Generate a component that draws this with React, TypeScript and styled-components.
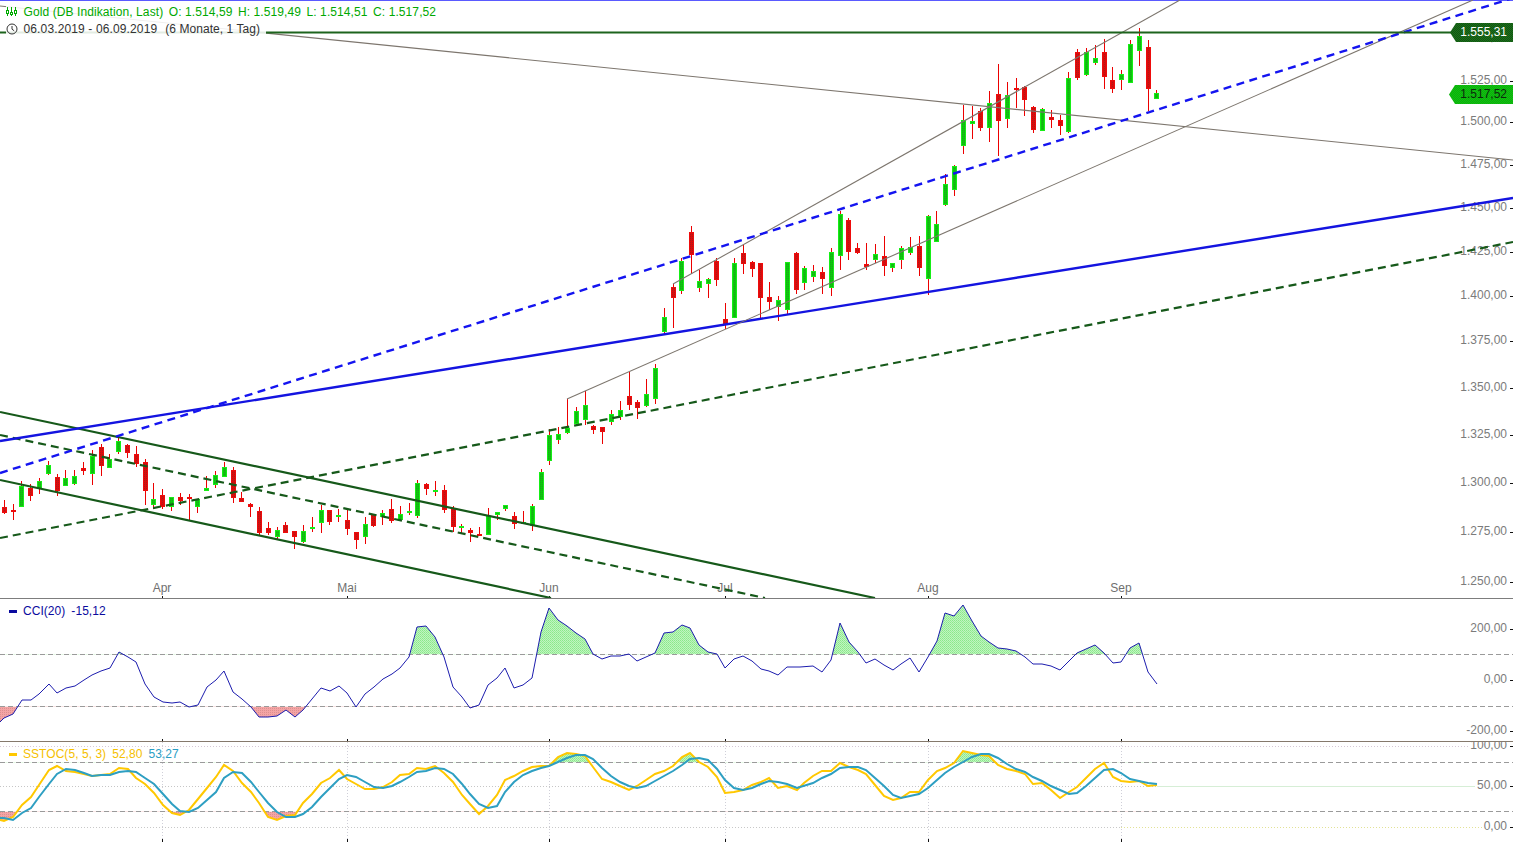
import * as React from "react";
import styled, { createGlobalStyle } from "styled-components";

// x, high, body top, body bottom, low, up/down
type Candle = [number, number, number, number, number, "u" | "d"];

const CANDLES: Candle[] = [
  [4, 500, 507, 513, 514, "d"], [13, 504, 510, 512, 520, "d"], [21, 481, 486, 507, 507, "u"], [30, 484, 488, 496, 501, "d"],
  [39, 478, 481, 489, 494, "u"], [48, 461, 465, 474, 475, "u"], [57, 474, 477, 491, 496, "d"], [65, 470, 478, 486, 486, "u"],
  [74, 470, 476, 484, 485, "u"], [83, 462, 468, 471, 475, "d"], [92, 450, 456, 474, 485, "u"], [101, 444, 447, 466, 476, "d"],
  [109, 454, 459, 468, 468, "u"], [118, 437, 441, 452, 454, "u"], [127, 444, 445, 453, 458, "d"], [136, 446, 454, 464, 467, "d"],
  [145, 459, 462, 491, 505, "d"], [153, 483, 499, 505, 509, "u"], [162, 489, 495, 507, 509, "d"], [171, 497, 497, 507, 511, "u"],
  [180, 493, 497, 501, 505, "d"], [189, 494, 497, 499, 520, "d"], [197, 499, 499, 507, 513, "u"], [206, 476, 488, 491, 491, "u"],
  [215, 471, 475, 485, 488, "u"], [224, 462, 467, 477, 477, "u"], [233, 467, 470, 498, 503, "d"], [241, 492, 498, 502, 502, "d"],
  [250, 503, 504, 507, 517, "d"], [259, 507, 511, 533, 535, "d"], [268, 522, 528, 533, 535, "d"], [277, 527, 530, 537, 539, "u"],
  [285, 522, 525, 533, 533, "d"], [294, 531, 531, 537, 549, "d"], [303, 525, 531, 542, 543, "u"], [312, 517, 527, 529, 532, "u"],
  [321, 505, 510, 523, 533, "u"], [329, 510, 510, 522, 525, "d"], [338, 509, 515, 517, 522, "u"], [347, 508, 520, 529, 535, "d"],
  [356, 532, 532, 540, 549, "d"], [365, 517, 524, 537, 544, "u"], [373, 514, 515, 526, 527, "d"], [382, 510, 513, 517, 525, "u"],
  [391, 499, 509, 521, 523, "d"], [400, 506, 514, 520, 520, "u"], [409, 503, 511, 513, 515, "u"], [417, 480, 483, 516, 518, "u"],
  [426, 483, 484, 489, 495, "d"], [435, 481, 490, 492, 496, "u"], [444, 485, 490, 510, 513, "d"], [453, 506, 509, 527, 532, "d"],
  [461, 524, 526, 528, 534, "u"], [470, 528, 530, 533, 542, "d"], [479, 527, 534, 536, 536, "d"], [488, 508, 516, 535, 535, "u"],
  [497, 512, 512, 515, 520, "u"], [505, 505, 505, 509, 511, "u"], [514, 512, 516, 524, 529, "d"], [523, 511, 522, 523, 523, "u"],
  [532, 504, 506, 526, 531, "u"], [541, 469, 472, 500, 500, "u"], [549, 429, 435, 461, 465, "u"], [558, 427, 434, 440, 444, "u"],
  [567, 399, 428, 433, 434, "u"], [576, 407, 411, 424, 425, "u"], [585, 391, 405, 420, 425, "u"], [593, 425, 426, 430, 434, "d"],
  [602, 427, 427, 432, 444, "d"], [611, 410, 414, 422, 425, "u"], [620, 401, 410, 417, 420, "u"], [629, 372, 396, 405, 410, "d"],
  [637, 400, 402, 408, 419, "d"], [646, 379, 394, 406, 407, "u"], [655, 364, 368, 399, 404, "u"], [664, 308, 317, 332, 335, "u"],
  [673, 284, 287, 298, 328, "d"], [681, 258, 261, 291, 294, "u"], [691, 226, 232, 255, 274, "d"], [699, 270, 281, 288, 292, "u"],
  [708, 278, 279, 284, 298, "u"], [716, 258, 261, 280, 286, "d"], [725, 303, 319, 324, 329, "d"], [734, 258, 263, 318, 318, "u"],
  [743, 245, 253, 264, 274, "d"], [752, 261, 262, 269, 277, "d"], [760, 263, 263, 298, 319, "d"], [769, 282, 297, 302, 310, "d"],
  [778, 296, 300, 307, 321, "u"], [787, 262, 262, 310, 315, "u"], [796, 252, 253, 290, 294, "d"], [804, 266, 268, 283, 290, "u"],
  [813, 265, 271, 277, 282, "u"], [822, 267, 272, 279, 294, "d"], [831, 248, 252, 288, 296, "u"], [840, 211, 214, 256, 270, "u"],
  [848, 218, 220, 252, 260, "d"], [857, 243, 248, 253, 254, "d"], [866, 243, 264, 267, 270, "d"], [875, 244, 254, 260, 263, "u"],
  [884, 236, 256, 266, 276, "d"], [892, 263, 263, 268, 272, "u"], [901, 246, 248, 260, 269, "u"], [910, 237, 247, 253, 255, "u"],
  [919, 236, 246, 268, 276, "d"], [928, 215, 216, 279, 295, "u"], [936, 211, 224, 242, 242, "u"], [945, 174, 184, 205, 206, "u"],
  [954, 165, 166, 190, 196, "u"], [963, 105, 120, 146, 154, "u"], [972, 106, 121, 124, 139, "u"], [980, 108, 111, 128, 131, "d"],
  [989, 91, 103, 128, 142, "u"], [998, 64, 94, 121, 156, "d"], [1007, 82, 95, 119, 128, "u"], [1016, 78, 88, 90, 108, "d"],
  [1024, 86, 87, 100, 116, "d"], [1033, 106, 107, 130, 133, "d"], [1042, 108, 109, 131, 131, "u"], [1051, 110, 117, 120, 128, "d"],
  [1060, 115, 120, 126, 135, "d"], [1068, 72, 78, 132, 133, "u"], [1077, 49, 52, 78, 80, "d"], [1086, 48, 52, 75, 76, "u"],
  [1095, 45, 58, 63, 65, "u"], [1104, 39, 52, 77, 89, "d"], [1112, 67, 80, 89, 93, "d"], [1121, 70, 74, 80, 90, "u"],
  [1130, 40, 44, 83, 83, "u"], [1139, 28, 36, 51, 66, "u"], [1148, 40, 47, 89, 111, "d"], [1156, 90, 93, 99, 99, "u"]
];

const CCI =
  "0,722 4,718 13,714 22,700 31,700 39,694 49,684 57,693 66,688 75,686 84,680 92,675 101,671 110,668 119,652 128,657 136,662 145,684 154,697 163,702 172,703 180,702 189,707 198,705 207,687 216,680 224,671 233,692 242,699 251,707 259,717 268,717 277,716 286,710 295,717 303,710 312,699 321,688 330,691 339,686 347,693 356,707 365,694 374,687 383,679 392,674 400,668 " +
  "409,657 417,627 426,626 435,637 444,657 453,687 462,697 470,708 479,705 488,685 497,678 505,668 514,688 523,685 532,678 541,632 549,608 558,620 567,626 576,633 585,639 593,654 602,659 611,656 620,656 629,654 637,661 646,657 655,653 664,633 673,632 682,625 690,628 699,645 708,652 717,654 725,668 734,659 743,656 752,661 761,669 769,671 778,675 787,667 800,667 " +
  "813,666 822,672 831,660 840,623 849,642 858,652 866,663 875,659 884,665 893,670 901,664 910,658 919,672 928,657 937,641 945,613 954,616 963,605 972,621 981,636 989,642 998,648 1007,649 1016,651 1025,657 1033,664 1042,664 1051,666 1060,670 1069,661 1077,653 1086,649 1095,645 1104,653 1113,663 1121,662 1130,648 1139,643 1148,672 1157,684";

const STOCH_FAST =
  "0,820 4,821 13,817 22,805 31,797 39,785 49,770 57,766 66,771 75,772 84,774 92,776 101,775 110,774 119,768 128,769 136,778 145,784 154,793 163,805 172,813 180,815 189,810 198,799 207,788 216,777 224,765 233,771 242,783 251,792 259,803 268,817 277,820 286,816 295,815 303,803 312,794 321,783 330,778 339,770 347,779 356,784 365,789 374,789 383,787 392,782 400,775 " +
  "409,774 417,768 426,769 435,766 444,773 453,782 462,795 470,804 479,814 488,806 497,795 505,780 514,776 523,771 532,767 541,766 549,766 558,757 567,753 576,754 585,756 593,767 602,779 611,782 620,786 629,790 637,786 646,780 655,774 664,771 673,766 682,757 690,753 699,762 708,767 717,777 725,793 734,792 743,790 752,785 761,782 769,778 778,788 787,786 797,790 " +
  "804,783 813,776 822,771 831,771 840,763 849,767 858,770 866,774 875,785 884,796 893,800 901,798 910,792 919,792 928,780 937,771 945,768 954,763 963,751 972,753 981,755 989,756 998,765 1007,769 1016,771 1025,774 1033,784 1042,783 1051,790 1060,798 1069,792 1077,787 1086,778 1095,769 1104,763 1113,777 1121,781 1130,782 1139,781 1148,786 1157,785";

const STOCH_SLOW =
  "0,818 4,818 13,820 22,813 31,808 39,797 49,784 57,774 66,769 75,770 84,773 92,776 101,775 110,775 119,772 128,771 136,772 145,778 154,784 163,794 172,804 180,811 189,812 198,808 207,800 216,792 224,778 233,772 242,773 251,782 259,792 268,803 277,812 286,817 295,817 303,814 312,807 321,797 330,788 339,779 347,775 356,777 365,782 374,787 383,788 392,786 400,782 " +
  "409,777 417,772 426,771 435,768 444,769 453,774 462,784 470,794 479,804 488,808 497,806 505,792 514,782 523,775 532,771 541,768 549,766 558,762 567,758 576,755 585,755 593,759 602,768 611,776 620,782 629,786 637,788 646,786 655,781 664,776 673,771 682,765 690,759 699,758 708,760 717,769 725,780 734,788 743,790 752,788 761,784 769,781 778,782 787,784 797,788 " +
  "813,783 822,778 831,774 840,768 849,767 858,767 866,770 875,778 884,786 893,795 901,798 910,796 919,794 928,788 937,780 945,773 954,767 963,762 972,757 981,754 989,754 998,758 1007,764 1016,769 1025,772 1033,777 1042,781 1051,786 1060,790 1069,794 1077,793 1086,786 1095,778 1104,770 1113,769 1121,773 1130,779 1139,781 1148,783 1157,784";

const PRICE_LABELS: [string, number][] = [
  ["1.550,00", 38], ["1.525,00", 81], ["1.500,00", 122], ["1.475,00", 165], ["1.450,00", 208], ["1.425,00", 252],
  ["1.400,00", 296], ["1.375,00", 341], ["1.350,00", 388], ["1.325,00", 435], ["1.300,00", 483], ["1.275,00", 532], ["1.250,00", 582]
];
const CCI_LABELS: [string, number][] = [["200,00", 629], ["0,00", 680], ["-200,00", 731]];
const STOCH_LABELS: [string, number][] = [["100,00", 746], ["50,00", 786], ["0,00", 827]];
const MONTHS: [string, number][] = [["Apr", 162], ["Mai", 347], ["Jun", 549], ["Jul", 725], ["Aug", 928], ["Sep", 1121]];

const closeOver = (points: string, level: number) => {
  const first = points.split(" ")[0].split(",")[0];
  const last = points.split(" ").pop()!.split(",")[0];
  return `${first},${level} ${points} ${last},${level}`;
};

const App: React.FC = () => (
  <Page>
    <GlobalStyle />
    <MainPane $height={599}>
      <Chart width={1513} height={598} viewBox="0 0 1513 598">
        <defs>
          <pattern id="upFill" width="2" height="2" patternUnits="userSpaceOnUse">
            <rect width="2" height="2" fill="#0cc80c" />
            <rect width="1" height="1" fill="#1ea01e" />
          </pattern>
          <pattern id="downFill" width="2" height="2" patternUnits="userSpaceOnUse">
            <rect width="2" height="2" fill="#dc0c0c" />
            <rect width="1" height="1" fill="#aa1a1a" />
          </pattern>
        </defs>
        <TopRule x1={0} x2={1513} y1={0.5} y2={0.5} />
        {PRICE_LABELS.map(([label, y]) => (
          <AxisTicked key={label} label={label} y={y} />
        ))}
        {MONTHS.map(([label, x]) => (
          <React.Fragment key={label}>
            <MonthLabel x={x} y={592}>{label}</MonthLabel>
            <Tick x1={x + 0.5} x2={x + 0.5} y1={596} y2={598} />
          </React.Fragment>
        ))}
        {CANDLES.map(([x, high, top, bottom, low, dir]) => (
          <g key={x}>
            <Wick x1={x + 0.5} x2={x + 0.5} y1={high} y2={low} />
            <Body x={x - 1.5} y={top + 0.5} width={4} height={Math.max(bottom - top - 1, 1)} $up={dir === "u"} />
          </g>
        ))}
        <SolidGreen x1={0} y1={412} x2={875} y2={598} />
        <SolidGreen x1={0} y1={480} x2={551} y2={598} />
        <DashedGreen x1={0} y1={435} x2={765} y2={598} />
        <DashedGreen x1={0} y1={538} x2={1513} y2={242} />
        <SolidBlue x1={0} y1={441} x2={1513} y2={198} />
        <GreyTrend x1={0} y1={6} x2={1513} y2={160} />
        <GreyTrend x1={567} y1={399} x2={1473} y2={0} />
        <GreyTrend x1={673} y1={284} x2={1180} y2={0} />
        <DashedBlue x1={0} y1={473} x2={1513} y2={-2} />
        <ResistanceLine x1={0} y1={32.5} x2={1513} y2={32.5} />
      </Chart>

      <Header>
        <GreenRow>
          <IconSlot>
            <svg width="12" height="9" viewBox="0 0 12 9" fill="none" stroke="#00aa00" strokeWidth="1">
              <path d="M1.5 0v9M5.5 0v9M9.5 0v9" />
              <rect x="0.5" y="3.5" width="2" height="3" fill="#fff" />
              <rect x="4.5" y="5.5" width="2" height="2" fill="#fff" />
              <rect x="8.5" y="3.5" width="2" height="3" fill="#fff" />
            </svg>
          </IconSlot>
          <span>Gold (DB Indikation, Last)</span>
          <span>O: 1.514,59</span>
          <span>H: 1.519,49</span>
          <span>L: 1.514,51</span>
          <span>C: 1.517,52</span>
        </GreenRow>
        <DateRow>
          <IconSlot>
            <svg width="12" height="12" viewBox="0 0 12 12" fill="none" stroke="#333" strokeWidth="1">
              <circle cx="6" cy="6" r="5" />
              <path d="M6 3v3.2l2.2 1.6" />
            </svg>
          </IconSlot>
          <span>06.03.2019 - 06.09.2019</span>
          <RangeNote>(6 Monate, 1 Tag)</RangeNote>
        </DateRow>
      </Header>

      <PriceBadge $tone="dark" $top={23}>1.555,31</PriceBadge>
      <PriceBadge $tone="light" $top={85}>1.517,52</PriceBadge>
    </MainPane>

    <IndicatorPane $height={143}>
      <Chart width={1513} height={142} viewBox="0 599 1513 142">
        <defs>
          <pattern id="overFill" width="2" height="2" patternUnits="userSpaceOnUse">
            <rect width="2" height="2" fill="#c0f5c0" />
            <rect width="1" height="1" fill="#8ae88a" />
            <rect x="1" y="1" width="1" height="1" fill="#98ec98" />
          </pattern>
          <pattern id="underFill" width="2" height="2" patternUnits="userSpaceOnUse">
            <rect width="2" height="2" fill="#f4a4a4" />
            <rect width="1" height="1" fill="#dd9090" />
          </pattern>
          <clipPath id="cciOver"><rect x="0" y="599" width="1513" height="55.5" /></clipPath>
          <clipPath id="cciUnder"><rect x="0" y="706.5" width="1513" height="35" /></clipPath>
          <clipPath id="stochOver"><rect x="0" y="742" width="1513" height="20.5" /></clipPath>
          <clipPath id="stochUnder"><rect x="0" y="811.5" width="1513" height="31" /></clipPath>
        </defs>
        <polygon points={closeOver(CCI, 654.5)} fill="url(#overFill)" clipPath="url(#cciOver)" />
        <polygon points={closeOver(CCI, 706.5)} fill="url(#underFill)" clipPath="url(#cciUnder)" />
        <LevelLine x1={0} x2={1513} y1={654.5} y2={654.5} />
        <LevelLine x1={0} x2={1513} y1={706.5} y2={706.5} />
        <CciLine points={CCI} />
        {CCI_LABELS.map(([label, y]) => (
          <AxisTicked key={label} label={label} y={y} />
        ))}
        {MONTHS.map(([label, x]) => (
          <Tick key={label} x1={x + 0.5} x2={x + 0.5} y1={739} y2={741} />
        ))}
      </Chart>
      <Legend>
        <LegendMark $color="#0a0a9e" />
        <LegendText $color="#0a0a9e">CCI(20)</LegendText>
        <LegendText $color="#0a0a9e">-15,12</LegendText>
      </Legend>
    </IndicatorPane>

    <StochPane $height={100}>
      <Chart width={1513} height={100} viewBox="0 742 1513 100">
        {MONTHS.map(([label, x]) => (
          <MonthGuide key={label} x1={x + 0.5} x2={x + 0.5} y1={742} y2={839} />
        ))}
        <DottedLevel x1={0} x2={1468} y1={746.5} y2={746.5} $color="#d6c8d6" />
        <DottedLevel x1={0} x2={1157} y1={786.5} y2={786.5} $color="#c6c6c6" />
        <PaleLevel x1={1157} x2={1475} y1={786.5} y2={786.5} />
        <DottedLevel x1={0} x2={1121} y1={827.5} y2={827.5} $color="#c8c8c8" />
        <DottedLevel x1={1121} x2={1483} y1={827.5} y2={827.5} $color="#e2e296" />
        <polygon points={closeOver(STOCH_FAST, 762.5)} fill="url(#overFill)" clipPath="url(#stochOver)" />
        <polygon points={closeOver(STOCH_FAST, 811.5)} fill="url(#underFill)" clipPath="url(#stochUnder)" />
        <LevelLine x1={0} x2={1513} y1={762.5} y2={762.5} />
        <LevelLine x1={0} x2={1513} y1={811.5} y2={811.5} />
        <FastLine points={STOCH_FAST} />
        <SlowLine points={STOCH_SLOW} />
        {STOCH_LABELS.map(([label, y]) => (
          <AxisTicked key={label} label={label} y={y} />
        ))}
        {MONTHS.map(([label, x]) => (
          <Tick key={label} x1={x + 0.5} x2={x + 0.5} y1={839} y2={842} />
        ))}
      </Chart>
      <Legend>
        <LegendMark $color="#ffc800" />
        <LegendText $color="#f5c000">SSTOC(5, 5, 3)</LegendText>
        <LegendText $color="#f5c000">52,80</LegendText>
        <LegendText $color="#2a9dc4">53,27</LegendText>
      </Legend>
    </StochPane>
  </Page>
);

export default App;

const AxisTicked: React.FC<{ label: string; y: number }> = ({ label, y }) => (
  <>
    <AxisLabel x={1507} y={y + 3}>{label}</AxisLabel>
    <Tick x1={1510} x2={1513} y1={y + 0.5} y2={y + 0.5} />
  </>
);

// css
const GlobalStyle = createGlobalStyle`
  html, body {
    margin: 0;
    padding: 0;
    background: #fff;
    overflow: hidden;
  }
  body {
    font-family: "Liberation Sans", Arial, sans-serif;
    font-size: 12px;
  }
`;

const Page = styled.div`
  display: flex;
  flex-direction: column;
  width: 1513px;
  height: 842px;
`;

const Pane = styled.section<{ $height: number }>`
  position: relative;
  flex: none;
  box-sizing: border-box;
  height: ${p => p.$height}px;
  overflow: hidden;
`;

const MainPane = styled(Pane)`
  border-bottom: 1px solid #7d7d7d;
`;

const IndicatorPane = styled(Pane)`
  border-bottom: 1px solid #85796c;
`;

const StochPane = styled(Pane)``;

const Chart = styled.svg`
  display: block;
`;

const Header = styled.div`
  position: absolute;
  left: 6px;
  top: 3px;
  display: flex;
  flex-direction: column;
  letter-spacing: 0.13px;
`;

const HeaderRow = styled.div`
  display: flex;
  align-items: center;
  height: 17px;
  white-space: nowrap;
  background: rgba(255, 255, 255, 0.88);
`;

const GreenRow = styled(HeaderRow)`
  gap: 5.5px;
  width: 432px;
  letter-spacing: 0.09px;
  color: #00a800;
`;

const DateRow = styled(HeaderRow)`
  width: 260px;
  color: #333;
`;

const IconSlot = styled.span`
  display: flex;
  align-items: center;
  width: 17.5px;
  flex: none;

  ${GreenRow} & {
    width: 12px;
  }
`;

const RangeNote = styled.span`
  margin-left: 8px;
  letter-spacing: 0.05px;
`;

const PriceBadge = styled.div<{ $tone: "dark" | "light"; $top: number }>`
  position: absolute;
  right: 0;
  top: ${p => p.$top}px;
  box-sizing: border-box;
  width: ${p => (p.$tone === "dark" ? 63 : 64)}px;
  height: 19px;
  padding-right: 6px;
  line-height: 18px;
  text-align: right;
  clip-path: polygon(6px 0, 100% 0, 100% 100%, 6px 100%, 0 50%);
  color: ${p => (p.$tone === "dark" ? "#fff" : "#0d2a0d")};
  background: ${p =>
    p.$tone === "dark"
      ? "repeating-conic-gradient(#0f5a0f 0 25%, #1e6a1e 0 50%) 0 0 / 2px 2px"
      : "repeating-conic-gradient(#08b408 0 25%, #14bc14 0 50%) 0 0 / 2px 2px"};
`;

const Legend = styled.div`
  position: absolute;
  left: 9px;
  top: 5px;
  display: flex;
  align-items: center;
  height: 14px;
  gap: 6px;
  letter-spacing: 0.05px;
  white-space: nowrap;
`;

const LegendMark = styled.span<{ $color: string }>`
  width: 8px;
  height: 3px;
  background: ${p => p.$color};
`;

const LegendText = styled.span<{ $color: string }>`
  color: ${p => p.$color};
`;

const AxisLabel = styled.text`
  font-family: "Liberation Sans", Arial, sans-serif;
  font-size: 12px;
  fill: #7b7b7b;
  text-anchor: end;
`;

const MonthLabel = styled.text`
  font-family: "Liberation Sans", Arial, sans-serif;
  font-size: 12px;
  fill: #6f6f6f;
  text-anchor: middle;
`;

const Tick = styled.line`
  stroke: #111;
  stroke-width: 1;
  shape-rendering: crispEdges;
`;

const TopRule = styled.line`
  stroke: #5a5aff;
  stroke-width: 1;
`;

const Wick = styled.line`
  stroke: #ec0000;
  stroke-width: 1;
  shape-rendering: crispEdges;
`;

const Body = styled.rect<{ $up: boolean }>`
  fill: url(${p => (p.$up ? "#upFill" : "#downFill")});
  stroke: ${p => (p.$up ? "#16ee16" : "#ee0c0c")};
  stroke-width: 1;
  shape-rendering: crispEdges;
`;

const SolidGreen = styled.line`
  stroke: #16591a;
  stroke-width: 2.2;
`;

const DashedGreen = styled(SolidGreen)`
  stroke-dasharray: 8 5;
`;

const ResistanceLine = styled.line`
  stroke: #1d641d;
  stroke-width: 2;
`;

const SolidBlue = styled.line`
  stroke: #1414e0;
  stroke-width: 2.4;
`;

const DashedBlue = styled(SolidBlue)`
  stroke: #1414f0;
  stroke-width: 2.4;
  stroke-dasharray: 8 5.5;
`;

const GreyTrend = styled.line`
  stroke: #7d766e;
  stroke-width: 1.1;
`;

const LevelLine = styled.line`
  stroke: #9a9a9a;
  stroke-width: 1;
  stroke-dasharray: 5 3;
  shape-rendering: crispEdges;
`;

const DottedLevel = styled.line<{ $color: string }>`
  stroke: ${p => p.$color};
  stroke-width: 1;
  stroke-dasharray: 1 2;
  shape-rendering: crispEdges;
`;

const PaleLevel = styled.line`
  stroke: #d6eed6;
  stroke-width: 1;
  shape-rendering: crispEdges;
`;

const MonthGuide = styled.line`
  stroke: #cfcfd8;
  stroke-width: 1;
  stroke-dasharray: 1 2;
  shape-rendering: crispEdges;
`;

const CciLine = styled.polyline`
  fill: none;
  stroke: #1c1cae;
  stroke-width: 1;
`;

const FastLine = styled.polyline`
  fill: none;
  stroke: #ffc800;
  stroke-width: 2;
`;

const SlowLine = styled.polyline`
  fill: none;
  stroke: #2e9fc2;
  stroke-width: 2;
`;
